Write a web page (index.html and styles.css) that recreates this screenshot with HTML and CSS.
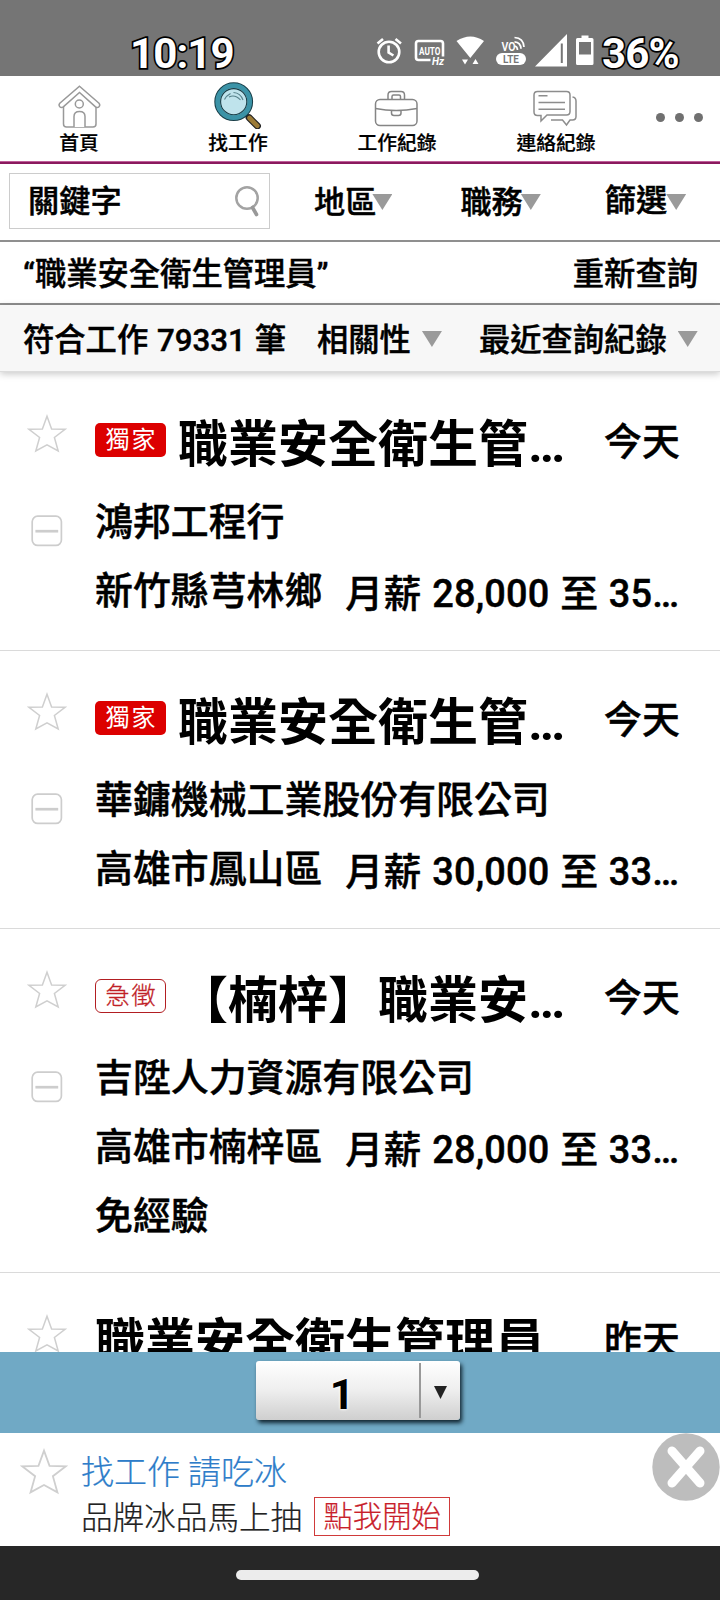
FILE: index.html
```html
<!DOCTYPE html>
<html lang="zh-Hant">
<head>
<meta charset="utf-8">
<title>找工作</title>
<link rel="stylesheet" href="styles.css">
</head>
<body>
<svg width="0" height="0" class="defs">
  <symbol id="star" viewBox="0 0 40 40"><path d="M20 2.2 24.6 14.9 38 15.3 27.4 23.5 31.2 37 20 30.8 8.8 37 12.6 23.5 2 15.3 15.4 14.9Z" fill="#fff" stroke="#cfcfcf" stroke-width="1.5"/></symbol>
  <symbol id="minus" viewBox="0 0 32 32"><rect x="1.2" y="1.2" width="29.2" height="29.2" rx="5.5" fill="#fff" stroke="#cdcdcd" stroke-width="1.7"/><path d="M4.400 16.200H27.200" stroke="#cdcdcd" stroke-width="2.700"/></symbol>
</svg>
<div class="screen">
  <header class="status">
    <span class="clock">10:19</span>
    <svg class="status-icons" width="220" height="36" viewBox="375 33 220 36">
      <g fill="none" stroke="#fff" stroke-width="2.6">
        <circle cx="389" cy="52" r="10.300"/>
        <path d="M388.600 45.500v7l4.800 3M377.500 43.500l5.500-4.500M401 43.500l-5.500-4.500"/>
        <path d="M430.500 60H418.500q-2.500 0-2.500-2.500V43.500q0-2.500 2.500-2.500H440.500q2.500 0 2.500 2.500V56.500"/>
        <path d="M514.500 46q3 .5 3 4M514.500 41.800q6.300.5 6.500 7M514.500 37.500q9 .5 9.500 9.500" stroke-width="1.700"/>
      </g>
      <g fill="#fff">
        <path d="M456.500 41q14-9 27.500 0L470.300 58ZM462 59.500h6l-3 5ZM472.500 64l3-5 3 5Z"/>
        <path d="M535 66.500 567 34V66.500ZM577.500 38h4v-2.500h7V38h3.500q1.500 0 1.500 1.500v24q0 1.500-1.500 1.500h-14.500q-1.500 0-1.500-1.500v-24q0-1.500 1.500-1.500Z"/>
        <rect x="496" y="53" width="30" height="12" rx="6"/>
        <text x="419" y="54.500" textLength="21.500" lengthAdjust="spacingAndGlyphs" class="tiny">AUTO</text>
        <text x="432" y="64.500" textLength="12" lengthAdjust="spacingAndGlyphs" class="tiny hz">Hz</text>
        <text x="501.500" y="50.500" textLength="14" lengthAdjust="spacingAndGlyphs" class="vo">VO</text>
      </g>
      <path d="M561.800 43.500V63" stroke="#757575" stroke-width="2"/>
      <path d="M579 42h12v12.500h-12Z" fill="#757575"/>
      <text x="503" y="62.500" textLength="16" lengthAdjust="spacingAndGlyphs" class="tiny lte">LTE</text>
    </svg>
    <span class="battery">36%</span>
  </header>

  <nav class="tabs">
    <a class="tab"><svg width="44" height="46" viewBox="57 82 44 46"><g fill="#fff" stroke="#999" stroke-width="1.500"><path d="M63.500 103V123q0 3 3 3H93q3 0 3-3V103"/><path d="M79.500 85.200 99 102.200q1.500 2 0 3.500-1.500 1.500-3.500.2L79.500 91.500 63.300 105.900q-2 1.300-3.500-.2-1.500-1.500 0-3.500Z"/><circle cx="79.300" cy="103" r="4"/><path d="M74 126V115.500q0-5 5.500-5t5.500 5V126"/></g></svg><span>首頁</span></a>
    <a class="tab"><svg width="50" height="48" viewBox="213 80 50 48"><path d="M249 116.500 257.500 125" stroke="#222" stroke-width="6.800" stroke-linecap="round"/><path d="M249.500 117 257.300 124.800" stroke="#9b7a36" stroke-width="4.600" stroke-linecap="round"/><circle cx="233.700" cy="100.700" r="16" fill="#bfe3ec" stroke="#173c46" stroke-width="6.800"/><circle cx="233.700" cy="100.700" r="16" fill="#bfe3ec" stroke="#3b93a7" stroke-width="4.800"/><circle cx="233.700" cy="100.700" r="13.100" fill="none" stroke="#173c46" stroke-width="1.100"/><path d="M224.500 98.500q1.500-3.500 6-6M233.500 91.500q7 .5 9.500 7.500M229 96q6-3 11.500 3" fill="none" stroke="#55808a" stroke-width="1.100"/></svg><span>找工作</span></a>
    <a class="tab"><svg width="46" height="40" viewBox="374 86 46 40"><g fill="#fff" stroke="#858585" stroke-width="1.500"><path d="M388 97V92q0-3.500 3.500-3.500H401q3.500 0 3.500 3.500V97M392 97V93.500q0-1.500 1.500-1.500H399q1.500 0 1.500 1.500V97"/><rect x="375.500" y="96.500" width="41.500" height="26" rx="4.500"/><path d="M375.500 105.500Q396 109.500 417 105.500M391.500 107.500V110q0 2.500 2.500 2.500H398.500q2.500 0 2.500-2.500V107.500"/></g></svg><span>工作紀錄</span></a>
    <a class="tab"><svg width="46" height="40" viewBox="533 86 46 40"><g fill="none" stroke="#8d8d8d" stroke-width="1.500"><path d="M572.500 94q3.500.5 3.500 4V113.500q0 3.500-3.500 3.500H570L566.500 122 562.500 117H551"/><path d="M537.500 88.500H566.500q3.500 0 3.500 3.500V108.500q0 3.500-3.500 3.500H547L541 118V112.500H537.500q-3.500 0-3.500-3.500V92q0-3.500 3.500-3.500Z"/><path d="M538.500 92.800h9M538.500 99.500h26.500M538.500 106.300h26.500"/></g></svg><span>連絡紀錄</span></a>
    <a class="more"><i></i><i></i><i></i></a>
  </nav>

  <div class="filters">
    <div class="keyword"><span>關鍵字</span><svg width="26" height="32" viewBox="0 0 26 32"><circle cx="13" cy="13" r="10.700" fill="none" stroke="#a3a3a3" stroke-width="2.500"/><path d="M18.500 22.500 22.500 29.500" stroke="#999" stroke-width="3.600" stroke-linecap="round"/></svg></div>
    <div class="filter area"><span>地區</span><i class="caret"></i></div>
    <div class="filter duty"><span>職務</span><i class="caret"></i></div>
    <div class="filter sift"><span>篩選</span><i class="caret"></i></div>
  </div>

  <div class="query"><span>“職業安全衛生管理員”</span><span>重新查詢</span></div>

  <div class="summary">
    <span class="count">符合工作 79331 筆</span>
    <span class="sort">相關性</span><i class="caret"></i>
    <span class="recent">最近查詢紀錄</span><i class="caret"></i>
  </div>

  <main class="jobs">
    <article class="job">
      <div class="marks"><svg class="star"><use href="#star"/></svg><svg class="minus"><use href="#minus"/></svg></div>
      <div class="info">
        <div class="head"><span class="badge exclusive">獨家</span><h2>職業安全衛生管…</h2><time>今天</time></div>
        <p class="company">鴻邦工程行</p>
        <p class="detail"><span>新竹縣芎林鄉</span><span class="pay">月薪 28,000 至 35…</span></p>
      </div>
    </article>
    <article class="job">
      <div class="marks"><svg class="star"><use href="#star"/></svg><svg class="minus"><use href="#minus"/></svg></div>
      <div class="info">
        <div class="head"><span class="badge exclusive">獨家</span><h2>職業安全衛生管…</h2><time>今天</time></div>
        <p class="company">華鏞機械工業股份有限公司</p>
        <p class="detail"><span>高雄市鳳山區</span><span class="pay">月薪 30,000 至 33…</span></p>
      </div>
    </article>
    <article class="job tall">
      <div class="marks"><svg class="star"><use href="#star"/></svg><svg class="minus"><use href="#minus"/></svg></div>
      <div class="info">
        <div class="head"><span class="badge urgent">急徵</span><h2>【楠梓】職業安…</h2><time>今天</time></div>
        <p class="company">吉陞人力資源有限公司</p>
        <p class="detail"><span>高雄市楠梓區</span><span class="pay">月薪 28,000 至 33…</span></p>
        <p class="extra">免經驗</p>
      </div>
    </article>
    <article class="job last">
      <div class="marks"><svg class="star"><use href="#star"/></svg></div>
      <div class="info">
        <div class="head"><h2>職業安全衛生管理員</h2><time>昨天</time></div>
      </div>
    </article>
  </main>

  <div class="pager"><div class="select"><span>1</span><i></i></div></div>

  <aside class="promo">
    <svg class="promo-star"><use href="#star"/></svg>
    <div class="promo-text">
      <p class="promo-title">找工作 請吃冰</p>
      <p class="promo-line"><span>品牌冰品馬上抽</span><b>點我開始</b></p>
    </div>
    <svg class="close" width="68" height="68" viewBox="0 0 68 68"><circle cx="34" cy="34" r="33.700" fill="#bdbdbd"/><path d="M20 18 48 50M48 18 20 50" stroke="#fff" stroke-width="9" stroke-linecap="round"/></svg>
  </aside>
  <footer class="gesture"><i></i></footer>
</div>
</body>
</html>
```
FILE: styles.css
```css
* { box-sizing: border-box; }
body { margin: 0; background: #fff; color: #000; font-family: Roboto, "Noto Sans CJK TC", sans-serif; font-weight: 500; }
p, h2 { margin: 0; }
svg { display: block; flex: none; }
span, time, h2, p { white-space: nowrap; }
.defs { position: absolute; }
.screen { width: 720px; height: 1600px; overflow: hidden; display: flex; flex-direction: column; }
.screen > * { flex: none; }

.status { height: 76px; background: #757575; display: flex; padding-top: 33px; }
.clock, .battery { color: #fff; font-weight: 700; font-size: 42px; line-height: 41px; -webkit-text-stroke: 3.4px #000; paint-order: stroke fill; }
.clock { width: 244px; margin-left: 130px; letter-spacing: -0.9px; }
.battery { margin-left: 7px; letter-spacing: -0.8px; }
.status-icons { margin-left: 1px; }
.tiny { font-size: 10px; font-weight: 700; }
.hz { font-style: italic; }
.lte { fill: #757575; font-weight: 600; }
.vo { font-size: 12px; font-weight: 600; }

.tabs { height: 88px; display: flex; border-bottom: 2px solid #8a1a5e; box-shadow: inset 0 -1px #c05f9a; }
.tab { width: 159px; display: flex; flex-direction: column; align-items: center; justify-content: flex-end; padding-bottom: 4px; font-size: 19.8px; line-height: 28px; -webkit-text-stroke: .2px #000; }
.tab svg { margin-bottom: 1px; margin-right: 2px; -webkit-text-stroke: 0; }
.tab span { margin-right: 1px; }
.more { width: 84px; display: flex; justify-content: center; gap: 10px; padding: 37px 0 0 2px; }
.more i { width: 9px; height: 9px; border-radius: 50%; background: #707070; }

.filters, .query, .summary, .jobs { -webkit-text-stroke: .45px #000; }
.filters { height: 78px; display: flex; border-bottom: 2px solid #8f8f8f; font-size: 31.2px; line-height: 40px; }
.keyword { width: 261px; height: 56px; margin: 9px 0 0 9px; border: 1px solid #ccc; display: flex; justify-content: space-between; padding: 8px 9px 0 18px; font-size: 31.2px; }
.keyword svg { margin-top: 3px; }
.filter { display: flex; padding-top: 19px; }
.filter .caret { margin-top: 11px; }
.area { margin-left: 44px; }
.area .caret { margin-left: -4px; }
.duty { margin-left: 68px; }
.duty .caret { margin-left: -2px; }
.sift { margin-left: 64px; padding-top: 17px; }
.sift .caret { margin-top: 13px; margin-left: -1px; }
.caret { width: 20px; height: 16px; background: #9a9a9a; clip-path: polygon(0 0, 100% 0, 50% 100%); flex: none; }

.query { height: 63px; display: flex; justify-content: space-between; padding: 13px 22px 0 23px; border-bottom: 2px solid #8f8f8f; font-size: 31.3px; line-height: 40px; }
.summary { height: 67px; position: relative; background: #f7f7f7; display: flex; padding: 16px 0 0 23px; border-bottom: 1px solid #dcdcdc; box-shadow: 0 2px 7px rgba(0,0,0,.22); font-size: 31.3px; line-height: 40px; }
.summary span { text-shadow: 0 0 2px #fff, 0 0 2px #fff; }
.count { width: 294px; word-spacing: 1px; }
.summary .caret { margin: 10px 0 0 11px; }
.recent { margin-left: 37px; }

.jobs { height: 980px; overflow: hidden; padding-top: 1px; }
.job { height: 278px; display: flex; border-bottom: 1px solid #dadada; }
.job.tall { height: 344px; }
.marks { width: 95px; padding: 41px 0 0 27px; flex: none; }
.star { width: 40px; height: 40px; }
.minus { width: 32px; height: 32px; margin: 61px 0 0 4px; }
.info { flex: 1; padding-top: 36px; font-size: 37.9px; line-height: 50px; }
.head { display: flex; height: 72px; }
.badge { width: 71px; height: 34px; border-radius: 5px; margin: 14px 12px 0 0; text-align: center; font-size: 24px; line-height: 35px; letter-spacing: 2px; padding-left: 2px; font-weight: 400; flex: none; -webkit-text-stroke: 0; }
.exclusive { background: #dc0000; color: #fff; }
.urgent { border: 1.5px solid #b21e22; color: #c02026; line-height: 33px; font-weight: 300; border-radius: 6px; -webkit-text-stroke: .3px #c02026; }
h2 { width: 425px; font-size: 50px; line-height: 72px; font-weight: 700; -webkit-text-stroke: 0; }
.head time { width: 76px; line-height: 66px; flex: none; margin-left: 84px; }
.badge + h2 + time { margin-left: 1px; }
.last h2, .last time { margin-top: -2px; }
.company, .detail, .extra { height: 69px; line-height: 82px; }
.detail { display: flex; }
.pay { margin-left: 23px; padding-top: 3px; letter-spacing: .2px; word-spacing: 1px; }

.pager { height: 81px; background: #70a9c5; padding: 9px 0 0 256px; }
.select { width: 204px; height: 59px; border-radius: 3px; background: linear-gradient(#fff, #eee 50%, #cfcfcf); box-shadow: 2px 3px 4px #10252f; display: flex; }
.select span { width: 165px; margin: 2px 0; border-right: 2px solid #999; text-align: center; font-size: 43px; font-weight: 700; line-height: 62px; padding-left: 9px; text-shadow: 0 0 3px #fff, 0 0 3px #fff; }
.select i { width: 13px; height: 13px; margin: 25px 0 0 13px; background: #222; clip-path: polygon(0 0, 100% 0, 50% 100%); }

.promo { height: 113px; display: flex; font-weight: 300; -webkit-text-stroke: .2px; }
.promo-star { width: 48px; height: 48px; margin: 15px 0 0 20px; }
.promo-text { width: 585px; padding: 17px 0 0 13px; }
.promo-title { color: #2e7dc9; font-size: 33px; line-height: 46px; }
.promo-line { display: flex; color: #222; font-size: 31.6px; line-height: 45px; }
.promo-line b { width: 136px; height: 39px; margin: 1px 0 0 12px; border: 1.5px solid #d03a3a; color: #c8202a; font-size: 29.4px; line-height: 39px; text-align: center; font-weight: 300; white-space: nowrap; }
.close { margin-left: -1px; }
.gesture { height: 54px; background: #272727; padding: 24px 0 0 236px; }
.gesture i { display: block; width: 243px; height: 10px; border-radius: 5px; background: #ececec; }
```
